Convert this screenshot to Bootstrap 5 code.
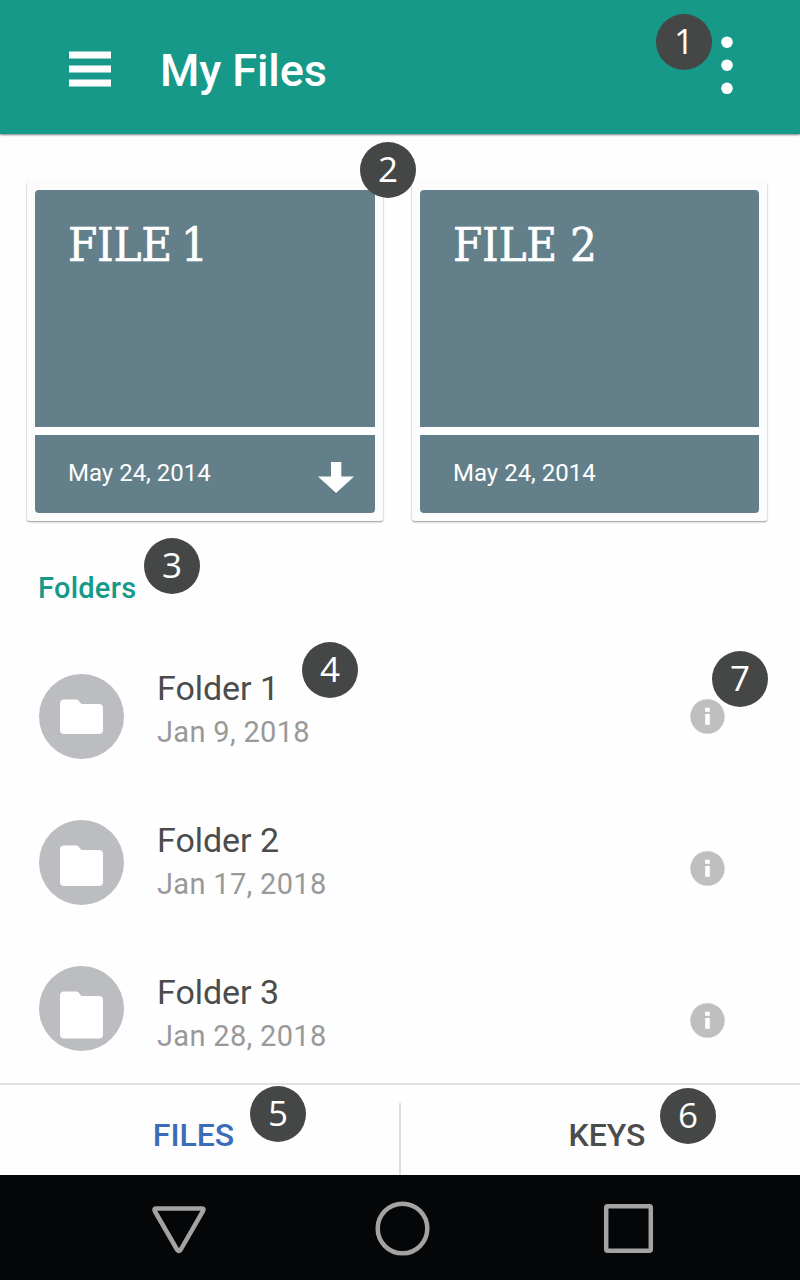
<!DOCTYPE html>
<html lang="en">
<head>
<meta charset="utf-8">
<meta name="viewport" content="width=device-width, initial-scale=1">
<title>My Files</title>
<link href="https://cdn.jsdelivr.net/npm/bootstrap@5.3.0/dist/css/bootstrap.min.css" rel="stylesheet">
<style>
body{font-family:Roboto,sans-serif;background:#fefefe;color:#4b4c4c}
.screen{width:800px;height:1280px}
.topbar{height:134px;background:#169989;box-shadow:0 1px 2px rgba(0,0,0,.5);padding:0 67px 0 69px}
.topbar h1{font-size:45px;line-height:54px;font-weight:500;margin:7px 0 0 49px;letter-spacing:-.1px}
.menu-icon{margin-top:4px}
.more-icon{margin-bottom:4px}
.files{padding:48px 32px 0 27px;gap:29px}
.tile{width:356px;height:339px;padding:8px;background:#fcfcfc;border-radius:3px;box-shadow:0 1px 2px rgba(0,0,0,.42)}
.tile + .tile{width:355px}
.tile-head,.tile-foot{background:#63808a;color:#fff;padding:0 21px 0 33px}
.tile-head{height:237px;border-radius:4px 4px 0 0}
.tile-foot{height:78px;border-radius:0 0 4px 4px;font-size:24px}
.tile-foot span{margin-bottom:2px}
.tile-body{background:#fff;gap:8px}
.tile-head h2{font-family:"Roboto Slab","DejaVu Serif Condensed","DejaVu Serif",serif;font-size:47px;line-height:56px;margin:0;padding-top:27px;font-weight:400;white-space:nowrap;letter-spacing:-.3px;-webkit-text-stroke:.6px #fff}
.tile:first-child h2{word-spacing:-4px}
.section-title{font-size:29px;line-height:36px;font-weight:500;color:#169989;margin:49px 0 0 38px;letter-spacing:.25px}
.folder-list{margin-top:35px;height:442px}
.folder-row{height:152px;flex:none;padding:0 75px 1px 39px}
.disc{width:85px;height:85px}
.shift-1{margin-bottom:12px}
.shift-2{margin-bottom:24px}
.folder-text{margin-left:33px;padding-top:26px}
.folder-name{font-size:34px;line-height:43px;letter-spacing:-.05px}
.folder-date{font-size:29px;line-height:44px;color:#999;letter-spacing:.32px}
.tabs{height:92px;border-top:2px solid #e1e1e1}
.tab-link{width:50%;font-size:32px;font-weight:500;color:#4b4c4c;line-height:40px;padding:30px 0 0 13px;text-decoration:none}
.tab-link.current{color:#3a6cb7;padding:30px 12px 0 0}
.divider{width:2px;height:72px;background:#dedede}
.navkeys{height:105px;background:#050608}
.callout{width:56px;height:56px;border-radius:50%;background:#454746;color:#fff;font:400 35px/54px "Open Sans",sans-serif;font-stretch:88%;text-align:center}
.c1{left:656px;top:14px}.c2{left:360px;top:142px}.c3{left:144px;top:538px}.c4{left:302px;top:642px}
.c5{left:250px;top:1086px}.c6{left:660px;top:1088px}.c7{left:712px;top:651px}
</style>
</head>
<body>
<div class="screen position-relative overflow-hidden d-flex flex-column">
  <header class="topbar d-flex align-items-center text-white">
    <svg class="menu-icon" width="42" height="36" viewBox="0 0 42 36" fill="#fff"><path d="M0 .5h42v7H0zM0 14.500h42v7H0zM0 28.500h42v7H0z"/></svg>
    <h1>My Files</h1>
    <svg class="more-icon ms-auto" width="12" height="60" viewBox="0 0 12 60" fill="#fff"><circle cx="6" cy="7.200" r="5.800"/><circle cx="6" cy="30.200" r="5.800"/><circle cx="6" cy="53.300" r="5.800"/></svg>
  </header>

  <section class="files d-flex">
    <article class="tile">
      <div class="tile-body d-flex flex-column">
        <div class="tile-head"><h2>FILE 1</h2></div>
        <div class="tile-foot d-flex align-items-center justify-content-between"><span>May 24, 2014</span>
          <svg class="mt-2" width="36" height="32" viewBox="0 0 36 32" fill="#fff"><path d="M13 0h10.300v14.500H36L18.100 31 0 14.500h13z"/></svg></div>
      </div>
    </article>
    <article class="tile">
      <div class="tile-body d-flex flex-column">
        <div class="tile-head"><h2>FILE 2</h2></div>
        <div class="tile-foot d-flex align-items-center"><span>May 24, 2014</span></div>
      </div>
    </article>
  </section>

  <h3 class="section-title">Folders</h3>

  <div class="folder-list d-flex flex-column overflow-hidden">
    <div class="folder-row d-flex align-items-center">
      <svg class="disc" viewBox="0 0 85 85"><circle cx="42.500" cy="42.500" r="42.500" fill="#bcbdc1"/><path fill="#fff" d="M25 25.500H37.500Q38.500 25.500 39.500 26.500L42.500 30H60Q64 30 64 34V56Q64 60 60 60H25Q21 60 21 56V29.500Q21 25.500 25 25.500Z"/></svg>
      <div class="folder-text align-self-start"><div class="folder-name">Folder 1</div><div class="folder-date">Jan 9, 2018</div></div>
      <svg class="ms-auto" width="35" height="35" viewBox="0 0 35 35"><circle cx="17.500" cy="17.500" r="17.200" fill="#bfbfbf"/><path fill="#fff" d="M15.200 8.800h4.600v4h-4.600zM15.200 15h4.600v10.800h-4.600z"/></svg>
    </div>
    <div class="folder-row d-flex align-items-center">
      <svg class="disc shift-1" viewBox="0 0 85 85"><circle cx="42.500" cy="42.500" r="42.500" fill="#bcbdc1"/><path fill="#fff" d="M25 25.500H37.500Q38.500 25.500 39.500 26.500L42.500 30H60Q64 30 64 34V62Q64 66 60 66H25Q21 66 21 62V29.500Q21 25.500 25 25.500Z"/></svg>
      <div class="folder-text align-self-start"><div class="folder-name">Folder 2</div><div class="folder-date">Jan 17, 2018</div></div>
      <svg class="ms-auto" width="35" height="35" viewBox="0 0 35 35"><circle cx="17.500" cy="17.500" r="17.200" fill="#bfbfbf"/><path fill="#fff" d="M15.200 8.800h4.600v4h-4.600zM15.200 15h4.600v10.800h-4.600z"/></svg>
    </div>
    <div class="folder-row d-flex align-items-center">
      <svg class="disc shift-2" viewBox="0 0 85 85"><circle cx="42.500" cy="42.500" r="42.500" fill="#bcbdc1"/><path fill="#fff" d="M25 25.500H37.500Q38.500 25.500 39.500 26.500L42.500 30H60Q64 30 64 34V68.500Q64 72.500 60 72.500H25Q21 72.500 21 68.500V29.500Q21 25.500 25 25.500Z"/></svg>
      <div class="folder-text align-self-start"><div class="folder-name">Folder 3</div><div class="folder-date">Jan 28, 2018</div></div>
      <svg class="ms-auto" width="35" height="35" viewBox="0 0 35 35"><circle cx="17.500" cy="17.500" r="17.200" fill="#bfbfbf"/><path fill="#fff" d="M15.200 8.800h4.600v4h-4.600zM15.200 15h4.600v10.800h-4.600z"/></svg>
    </div>
  </div>

  <nav class="tabs d-flex">
    <a class="tab-link current text-center" href="#">FILES</a>
    <div class="divider align-self-end"></div>
    <a class="tab-link text-center" href="#">KEYS</a>
  </nav>

  <footer class="navkeys">
    <svg width="800" height="105" viewBox="0 0 800 105" fill="none" stroke="#a3a3a3" stroke-width="4.500" stroke-linejoin="round"><path d="M156 33.500H202Q204.500 33.500 203 36L180.500 75Q178.900 77.200 177.300 75L155 36.500Q153.500 33.500 156 33.500Z"/><circle cx="402.500" cy="53.500" r="24.800"/><rect x="606.200" y="31.200" width="44.600" height="44.600" rx="1.500"/></svg>
  </footer>

  <span class="callout c1 position-absolute">1</span>
  <span class="callout c2 position-absolute">2</span>
  <span class="callout c3 position-absolute">3</span>
  <span class="callout c4 position-absolute">4</span>
  <span class="callout c5 position-absolute">5</span>
  <span class="callout c6 position-absolute">6</span>
  <span class="callout c7 position-absolute">7</span>
</div>
<script src="https://cdn.jsdelivr.net/npm/bootstrap@5.3.0/dist/js/bootstrap.bundle.min.js"></script>
</body>
</html>
